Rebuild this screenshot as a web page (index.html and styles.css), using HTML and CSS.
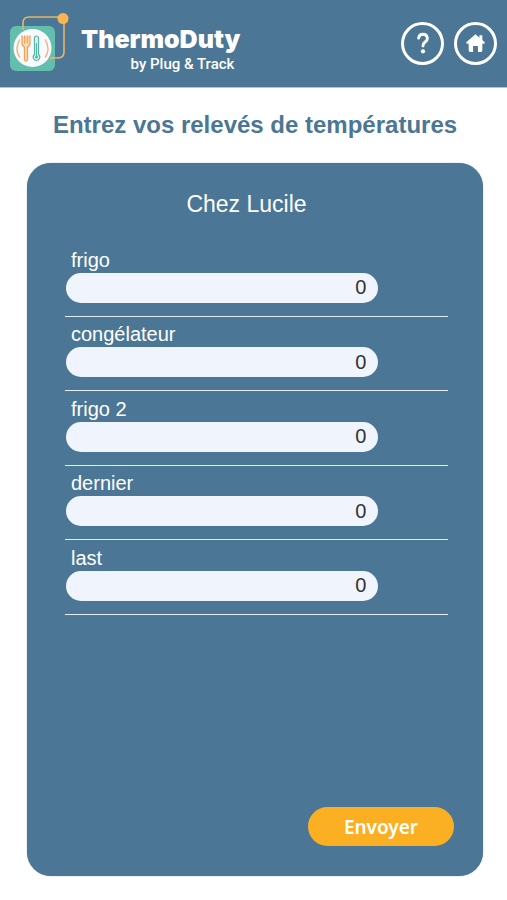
FILE: index.html
```
<!DOCTYPE html>
<html lang="fr">

<head>
    <meta charset="UTF-8">
    <meta name="viewport" content="width=device-width, initial-scale=1.0">
    <title>ThermoDuty</title>
    <link rel="stylesheet" href="styles.css">
</head>

<body>
    <header class="head">
        <svg class="logo" viewBox="0 0 62 62" aria-hidden="true">
            <rect x="1" y="16" width="45" height="45" rx="6" fill="#64beb0" />
            <path d="M14 20V13q0-6 6-6h32q3 0 3 3v32q0 6-6 6h-8" fill="none" stroke="#e9b565" stroke-width="1.6" />
            <circle cx="54" cy="8.5" r="5.5" fill="#fab551" />
            <circle cx="23.5" cy="38" r="19" fill="#f8f9fc" />
            <path d="M10.5 30q-5 9 0 17M36.5 30q5 9 0 17" fill="none" stroke="#efb77b" stroke-width="1.5" stroke-linecap="round" />
            <path d="M13 26v7q0 3 2.5 4v12.5q0 1.5 1.5 1.5t1.5-1.5V37q2.5-1 2.5-4v-7M15.7 26v7M18.4 26v7" fill="#fbdcb8" stroke="#efa557" stroke-width="1.3" stroke-linecap="round" />
            <path d="M25.5 44.5V28q0-2 2-2t2 2v16.5q2 1.5 1 4-1 2-3 2t-3-2q-1-2.5 1-4zM27.5 33v13" fill="#e3f3f1" stroke="#55b5a7" stroke-width="1.2" />
            <circle cx="27.5" cy="47" r="1.5" fill="#55b5a7" />
        </svg>
        <div class="brand">
            <p class="name">ThermoDuty</p>
            <p class="by">by Plug &amp; Track</p>
        </div>
        <nav class="links">
            <a class="round" href="#aide" aria-label="Aide">
                <svg viewBox="0 0 38 38" aria-hidden="true">
                    <path d="M15 13.5q.5-4 4.5-4t4.5 4q0 2.3-2.3 4t-2.2 4" fill="none" stroke="#fff" stroke-width="3" stroke-linecap="round" />
                    <circle cx="19.5" cy="27" r="2.2" fill="#fff" />
                </svg>
            </a>
            <a class="round" href="#accueil" aria-label="Accueil">
                <svg viewBox="0 0 38 38" aria-hidden="true">
                    <path d="M19 9.5l4 3.5V10.5h3V15.5l2.5 2.3q.5 1.5-1 1.5H26v7q0 1.5-1.5 1.5H21.500V21.5h-5v6.3h-3Q12 27.8 12 26.3v-7h-1.5q-1.5 0-1-1.5z" fill="#fff" />
                </svg>
            </a>
        </nav>
    </header>

    <main class="container">
        <h1>Entrez vos relevés de températures</h1>

        <form class="card">
            <h2>Chez Lucile</h2>
            <div class="fields">
                <div class="field">
                    <label for="t1">frigo</label>
                    <input id="t1" type="text" inputmode="decimal" value="0">
                </div>
                <div class="field">
                    <label for="t2">congélateur</label>
                    <input id="t2" type="text" inputmode="decimal" value="0">
                </div>
                <div class="field">
                    <label for="t3">frigo 2</label>
                    <input id="t3" type="text" inputmode="decimal" value="0">
                </div>
                <div class="field">
                    <label for="t4">dernier</label>
                    <input id="t4" type="text" inputmode="decimal" value="0">
                </div>
                <div class="field">
                    <label for="t5">last</label>
                    <input id="t5" type="text" inputmode="decimal" value="0">
                </div>
            </div>
            <button class="send" type="submit">Envoyer</button>
        </form>
    </main>
</body>

</html>
```
FILE: styles.css
```
* {
    margin: 0;
    padding: 0;
    box-sizing: border-box;
}

body {
    display: flex;
    flex-direction: column;
    min-height: 100vh;
    background: #fff;
    font-family: "Liberation Sans", Arial, sans-serif;
}

.head {
    display: flex;
    align-items: center;
    padding: 9px 10px 14px 9px;
    background: #4b7696;
    border-bottom: 1px solid #a9c4d8;
    color: #fff;
}

.logo {
    width: 62px;
    height: 62px;
}

.brand {
    margin-left: 10px;
    padding-top: 17px;
    text-align: right;
}

.name {
    font: 900 25px/26px Inter, sans-serif;
}

.by {
    padding-top: 3px;
    padding-right: 6px;
    font: 500 15px/18px Roboto, sans-serif;
}

.links {
    display: flex;
    gap: 10px;
    margin-left: auto;
    padding-top: 4px;
}

.round {
    width: 43px;
    height: 43px;
    border: 3px solid #fff;
    border-radius: 50%;
}

.round svg {
    display: block;
    width: 100%;
}

.container {
    flex: 1;
    display: flex;
    flex-direction: column;
    padding: 22px 24px 24px 27px;
}

h1 {
    margin-bottom: 23px;
    color: #4b7696;
    font-size: 24px;
    line-height: 30px;
    text-align: center;
}

.card {
    flex: 1;
    display: flex;
    flex-direction: column;
    padding: 26px 35px 30px 38px;
    background: #4b7696;
    border-radius: 24px;
    box-shadow: 0 0 1px #4b7696;
    color: #fff;
}

h2 {
    margin-right: 20px;
    margin-bottom: 23px;
    font-size: 23px;
    font-weight: 400;
    line-height: 30px;
    text-align: center;
}

/* equal rows, one per probe */
.fields {
    display: grid;
    grid-auto-rows: 1fr;
    min-height: 373px;
}

.field {
    display: flex;
    flex-direction: column;
    align-items: flex-start;
    justify-content: flex-end;
    padding: 0 1px 13px;
    border-bottom: 1px solid #e4ecf5;
}

.field label {
    padding: 0 5px;
    font-size: 20px;
    line-height: 26px;
}

.field input {
    width: 82%;
    height: 30px;
    padding: 0 12px;
    background: #f0f4fd;
    border: none;
    border-radius: 15px;
    color: #333;
    font-family: inherit;
    font-size: 20px;
    text-align: right;
}

.send {
    align-self: flex-end;
    width: 146px;
    height: 39px;
    margin-top: auto;
    margin-right: -6px;
    background: #fbb024;
    border: none;
    border-radius: 20px;
    color: #fff;
    font: 600 19px "Noto Sans", sans-serif;
}
```
